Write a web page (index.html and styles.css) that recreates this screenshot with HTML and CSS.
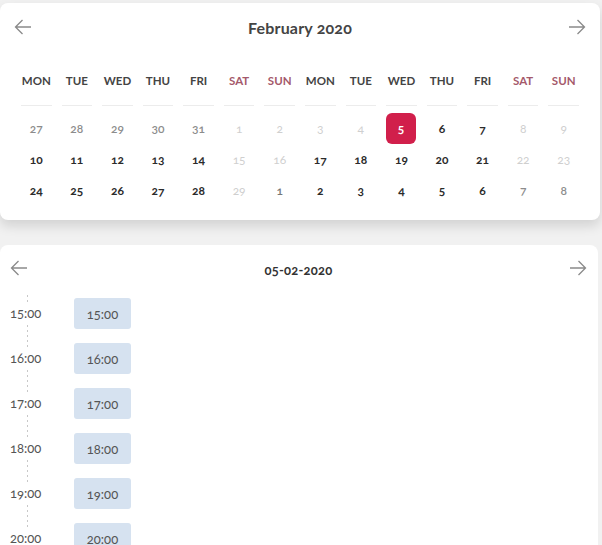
FILE: index.html
```html
<!DOCTYPE html>
<html>
<head>
<meta charset="utf-8">
<link rel="stylesheet" href="styles.css">
</head>
<body>
<div class="card cal">
  <div class="head">
    <svg class="arrow" width="18" height="16" viewBox="0 0 18 16"><path d="M17 8H1.5M8.5 1L1.5 8l7 7" fill="none" stroke="#8a8a8a" stroke-width="1.3"/></svg>
    <div class="title">February 2020</div>
    <svg class="arrow" width="18" height="16" viewBox="0 0 18 16"><path d="M1 8h15.5M9.5 1l7 7-7 7" fill="none" stroke="#8a8a8a" stroke-width="1.3"/></svg>
  </div>
  <div class="grid">
    <div class="wd">MON</div><div class="wd">TUE</div><div class="wd">WED</div><div class="wd">THU</div><div class="wd">FRI</div><div class="wd we">SAT</div><div class="wd we">SUN</div>
    <div class="wd">MON</div><div class="wd">TUE</div><div class="wd">WED</div><div class="wd">THU</div><div class="wd">FRI</div><div class="wd we">SAT</div><div class="wd we">SUN</div>

    <div class="d prev">27</div><div class="d prev">28</div><div class="d prev">29</div><div class="d prev">30</div><div class="d prev">31</div><div class="d off">1</div><div class="d off">2</div>
    <div class="d off">3</div><div class="d off">4</div><div class="d"><span class="sel">5</span></div><div class="d">6</div><div class="d">7</div><div class="d off">8</div><div class="d off">9</div>

    <div class="d">10</div><div class="d">11</div><div class="d">12</div><div class="d">13</div><div class="d">14</div><div class="d off">15</div><div class="d off">16</div>
    <div class="d">17</div><div class="d">18</div><div class="d">19</div><div class="d">20</div><div class="d">21</div><div class="d off">22</div><div class="d off">23</div>

    <div class="d">24</div><div class="d">25</div><div class="d">26</div><div class="d">27</div><div class="d">28</div><div class="d off">29</div><div class="d next">1</div>
    <div class="d">2</div><div class="d">3</div><div class="d">4</div><div class="d">5</div><div class="d">6</div><div class="d prev">7</div><div class="d prev">8</div>
  </div>
</div>

<div class="card day">
  <div class="head head2">
    <svg class="arrow" width="18" height="16" viewBox="0 0 18 16"><path d="M17 8H1.5M8.5 1L1.5 8l7 7" fill="none" stroke="#8a8a8a" stroke-width="1.3"/></svg>
    <div class="title small">05-02-2020</div>
    <svg class="arrow" width="18" height="16" viewBox="0 0 18 16"><path d="M1 8h15.5M9.5 1l7 7-7 7" fill="none" stroke="#8a8a8a" stroke-width="1.3"/></svg>
  </div>
  <div class="timeline">
    <div class="row"><span class="lbl">15:00</span><span class="slot">15:00</span></div>
    <div class="row"><span class="lbl">16:00</span><span class="slot">16:00</span></div>
    <div class="row"><span class="lbl">17:00</span><span class="slot">17:00</span></div>
    <div class="row"><span class="lbl">18:00</span><span class="slot">18:00</span></div>
    <div class="row"><span class="lbl">19:00</span><span class="slot">19:00</span></div>
    <div class="row"><span class="lbl">20:00</span><span class="slot">20:00</span></div>
  </div>
</div>
</body>
</html>
```
FILE: styles.css
```css
html, body {
  margin: 0;
  padding: 0;
}
body {
  background: #f1f1f1;
  font-family: "Lato", "Open Sans", sans-serif;
  font-variant-numeric: oldstyle-nums;
  color: #333;
  height: 545px;
  overflow: hidden;
}
.card {
  background: #fff;
  width: 600px;
  border-radius: 8px;
}
.cal {
  margin-top: 3px;
  height: 217px;
  box-shadow: 0 6px 12px rgba(0, 0, 0, 0.13);
  box-sizing: border-box;
}
.day {
  margin-top: 25px;
  width: 598px;
  height: 320px;
}
.head {
  height: 48px;
  display: flex;
  align-items: center;
  justify-content: space-between;
  padding: 0 14px;
}
.head2 {
  height: 46px;
  padding: 0 11px 0 10px;
  align-items: center;
}
.arrow {
  display: block;
}
.title {
  font-size: 16px;
  font-weight: 700;
  color: #444;
  letter-spacing: 0.2px;
}
.title.small {
  font-size: 13px;
  color: #333;
  margin-top: 3px;
}
.grid {
  display: grid;
  grid-template-columns: repeat(14, 1fr);
  padding: 0 16px;
}
.wd {
  font-size: 11.5px;
  font-weight: 700;
  color: #444;
  text-align: center;
  line-height: 16px;
  padding-top: 22px;
  padding-bottom: 16px;
  margin: 0 5px 7px;
  border-bottom: 1px solid #ececec;
}
.wd.we {
  color: #a4596b;
}
.d {
  height: 31px;
  display: flex;
  align-items: center;
  justify-content: center;
  font-size: 12px;
  font-weight: 700;
  color: #2b2b2b;
}
.d.prev {
  color: #8c8c8c;
  font-weight: 600;
}
.d.off {
  color: #cfcfcf;
  font-weight: 400;
}
.d.next {
  color: #777777;
  font-weight: 600;
}
.sel {
  width: 30px;
  height: 31px;
  border-radius: 6px;
  background: #d11f4b;
  color: #fff;
  display: flex;
  align-items: center;
  justify-content: center;
  margin-left: -1px;
}
.timeline {
  position: relative;
}
.timeline::before {
  content: "";
  position: absolute;
  left: 27px;
  top: 4px;
  bottom: 0;
  width: 1px;
  background: repeating-linear-gradient(to bottom, #c8c8c8 0 2px, transparent 2px 5px);
}
.row {
  height: 45px;
  display: flex;
  align-items: center;
}
.lbl {
  position: relative;
  width: 34px;
  margin-left: 10px;
  margin-right: 30px;
  font-size: 13px;
  font-weight: 400;
  color: #555;
  background: #fff;
  line-height: 17px;
}
.slot {
  width: 57px;
  height: 31px;
  border-radius: 3px;
  background: #d6e2f0;
  color: #555;
  font-size: 13px;
  display: flex;
  align-items: center;
  justify-content: center;
}
```
